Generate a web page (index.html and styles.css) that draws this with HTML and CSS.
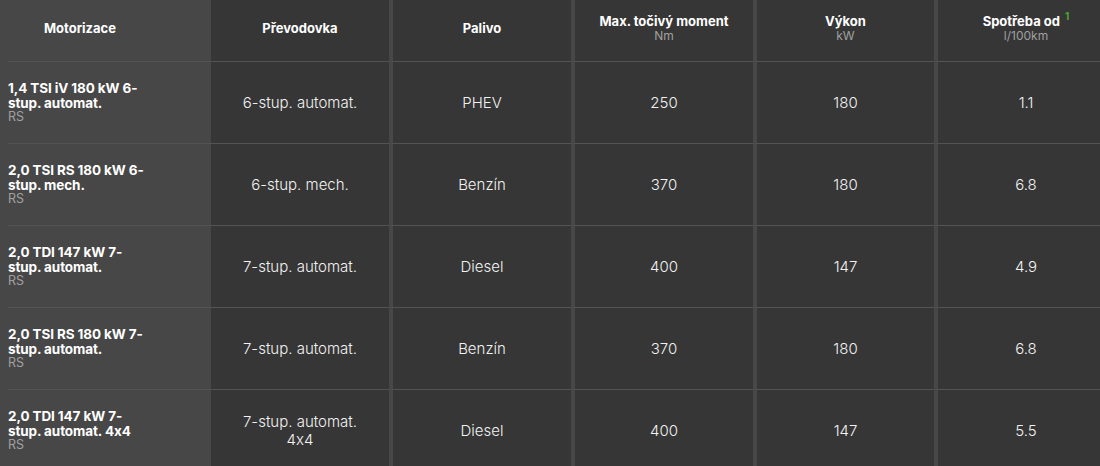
FILE: index.html
```html
<!DOCTYPE html>
<html lang="cs">
<head>
<meta charset="utf-8">
<title>Motorizace</title>
<link rel="stylesheet" href="styles.css">
</head>
<body>
<div class="table">
  <div class="row head">
    <div class="cell first"><span class="hname">Motorizace</span></div>
    <div class="cell"><span class="hname">Převodovka</span></div>
    <div class="cell sep"><span class="hname">Palivo</span></div>
    <div class="cell sep"><span class="hname">Max. točivý moment</span><span class="unit">Nm</span></div>
    <div class="cell sep"><span class="hname">Výkon</span><span class="unit">kW</span></div>
    <div class="cell sep"><span class="hname">Spotřeba od <sup class="note">1</sup></span><span class="unit">l/100km</span></div>
  </div>

  <div class="row">
    <div class="cell first"><div class="engine"><span class="ename">1,4 TSI iV 180 kW 6-stup. automat.</span><span class="trim">RS</span></div></div>
    <div class="cell"><span class="val wrap">6-stup. automat.</span></div>
    <div class="cell sep"><span class="val">PHEV</span></div>
    <div class="cell sep"><span class="val">250</span></div>
    <div class="cell sep"><span class="val">180</span></div>
    <div class="cell sep"><span class="val">1.1</span></div>
  </div>

  <div class="row">
    <div class="cell first"><div class="engine"><span class="ename">2,0 TSI RS 180 kW 6-stup. mech.</span><span class="trim">RS</span></div></div>
    <div class="cell"><span class="val wrap">6-stup. mech.</span></div>
    <div class="cell sep"><span class="val">Benzín</span></div>
    <div class="cell sep"><span class="val">370</span></div>
    <div class="cell sep"><span class="val">180</span></div>
    <div class="cell sep"><span class="val">6.8</span></div>
  </div>

  <div class="row">
    <div class="cell first"><div class="engine"><span class="ename">2,0 TDI 147 kW 7-stup. automat.</span><span class="trim">RS</span></div></div>
    <div class="cell"><span class="val wrap">7-stup. automat.</span></div>
    <div class="cell sep"><span class="val">Diesel</span></div>
    <div class="cell sep"><span class="val">400</span></div>
    <div class="cell sep"><span class="val">147</span></div>
    <div class="cell sep"><span class="val">4.9</span></div>
  </div>

  <div class="row">
    <div class="cell first"><div class="engine"><span class="ename">2,0 TSI RS 180 kW 7-stup. automat.</span><span class="trim">RS</span></div></div>
    <div class="cell"><span class="val wrap">7-stup. automat.</span></div>
    <div class="cell sep"><span class="val">Benzín</span></div>
    <div class="cell sep"><span class="val">370</span></div>
    <div class="cell sep"><span class="val">180</span></div>
    <div class="cell sep"><span class="val">6.8</span></div>
  </div>

  <div class="row">
    <div class="cell first"><div class="engine"><span class="ename">2,0 TDI 147 kW 7-stup. automat. 4x4</span><span class="trim">RS</span></div></div>
    <div class="cell"><span class="val wrap">7-stup. automat. 4x4</span></div>
    <div class="cell sep"><span class="val">Diesel</span></div>
    <div class="cell sep"><span class="val">400</span></div>
    <div class="cell sep"><span class="val">147</span></div>
    <div class="cell sep"><span class="val">5.5</span></div>
  </div>
</div>
</body>
</html>
```
FILE: styles.css
```css
html, body {
  margin: 0;
  padding: 0;
  background: #363636;
  overflow: hidden;
}
body {
  width: 1100px;
  height: 466px;
  font-family: Inter, "Noto Sans", "Liberation Sans", sans-serif;
  font-feature-settings: "calt" 0;
  color: #f2f2f2;
}
.table {
  display: flex;
  flex-direction: column;
  width: 1114px;
}
.row {
  display: grid;
  grid-template-columns: 211px 178px 182px 182px 181px 180px;
  height: 82px;
}
.row.head {
  height: 61px;
}
.cell {
  display: flex;
  flex-direction: column;
  align-items: center;
  justify-content: center;
  text-align: center;
  background: #363636;
  border-top: 1px solid #535353;
  box-sizing: border-box;
}
.row.head .cell {
  border-top: none;
  padding-bottom: 5px;
}
.cell.sep {
  border-left: 4px solid #474747;
}
.cell.first {
  background: linear-gradient(#535353, #535353) 8px 0 / 100% 1px no-repeat, #474747;
  border-top: none;
  align-items: flex-start;
  padding: 1px 59px 0 8px;
  text-align: left;
}
.row.head .cell.first {
  align-items: center;
  text-align: center;
  background: #474747;
  padding: 0 59px 5px 8px;
}
.hname {
  font-size: 13px;
  font-weight: 700;
  line-height: 15px;
  color: #ffffff;
}
.unit {
  font-size: 12px;
  line-height: 13px;
  color: #a0a0a0;
}
.note {
  color: #4ba82e;
  font-size: 10px;
  vertical-align: top;
  position: relative;
  top: -5px;
  margin-left: 2px;
}
.engine {
  display: flex;
  flex-direction: column;
  width: 144px;
}
.ename {
  font-size: 13.5px;
  font-weight: 700;
  line-height: 14.5px;
  color: #ffffff;
  letter-spacing: -0.1px;
}
.trim {
  font-size: 12.5px;
  line-height: 14px;
  color: #a0a0a0;
}
.val {
  font-size: 15px;
  font-weight: 300;
  line-height: 18px;
  color: #f2f2f2;
}
.val.wrap {
  padding: 0 24px;
}
```
